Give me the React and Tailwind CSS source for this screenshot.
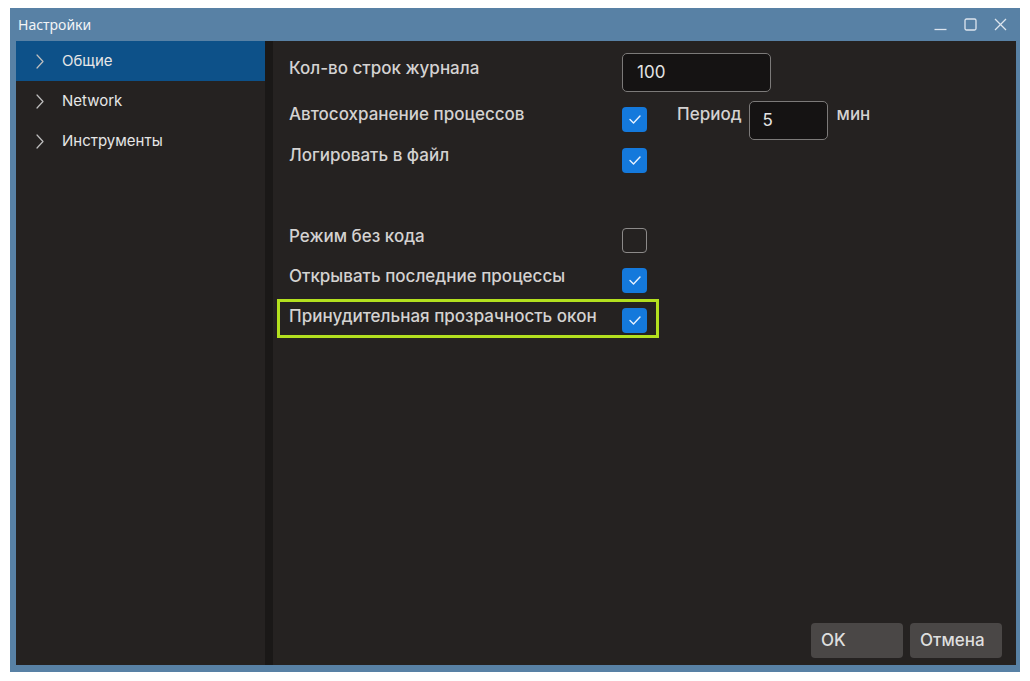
import React from "react";

const Check = ({ on }) =>
  on ? (
    <div className="w-[25px] h-[25px] rounded-[4px] bg-[#1479dc] flex items-center justify-center shrink-0">
      <svg width="14" height="11" viewBox="0 0 14 11" fill="none">
        <polyline points="2,5.5 5.5,9 12,2" stroke="#e8f2ff" strokeWidth="1.4" strokeLinecap="round" strokeLinejoin="round" />
      </svg>
    </div>
  ) : (
    <div className="w-[25px] h-[25px] rounded-[4px] border-[1.5px] border-[#8c8a89] shrink-0" />
  );

const Chevron = () => (
  <svg width="8" height="15" viewBox="0 0 8 15" fill="none" className="shrink-0">
    <polyline points="1,1 7,7.5 1,14" stroke="#bfbfbf" strokeWidth="1.2" strokeLinecap="round" strokeLinejoin="round" />
  </svg>
);

const NavItem = ({ label, active }) => (
  <div className={`h-[40px] flex items-center pl-[20px] ${active ? "bg-[#0d5189]" : ""}`}>
    <Chevron />
    <span className="ml-[18px] text-[15px] text-[#e6e6e6]">{label}</span>
  </div>
);

export default function App() {
  return (
    <div className="w-[1030px] h-[681px] bg-white pt-[8px] pl-[10px]" style={{ fontFamily: "Inter, 'Noto Sans', sans-serif" }}>
      <div className="w-[1010px] h-[664px] bg-[#5881a5] flex flex-col">
        {/* Title bar */}
        <div className="h-[33px] flex items-center pl-[8px] pr-[13px] shrink-0">
          <span className="text-[14px] text-[#f2f4f6]" style={{ fontFamily: "'Noto Sans', sans-serif" }}>Настройки</span>
          <div className="ml-auto flex items-center gap-[17px]">
            <svg width="13" height="13" viewBox="0 0 13 13">
              <line x1="0.5" y1="11.5" x2="12.5" y2="11.5" stroke="#dde5ee" strokeWidth="1.3" />
            </svg>
            <svg width="13" height="13" viewBox="0 0 13 13" fill="none">
              <rect x="1" y="1" width="11" height="11" rx="1.5" stroke="#dde5ee" strokeWidth="1.3" />
            </svg>
            <svg width="13" height="13" viewBox="0 0 13 13">
              <line x1="1" y1="1" x2="12" y2="12" stroke="#dde5ee" strokeWidth="1.3" />
              <line x1="12" y1="1" x2="1" y2="12" stroke="#dde5ee" strokeWidth="1.3" />
            </svg>
          </div>
        </div>
        {/* Body */}
        <div className="flex-1 flex pl-[6px] pr-[4px] pb-[7px] min-h-0">
          <div className="w-[249px] bg-[#252221] flex flex-col shrink-0">
            <NavItem label="Общие" active />
            <NavItem label="Network" />
            <NavItem label="Инструменты" />
          </div>
          <div className="w-[8px] bg-[#1a1817] shrink-0" />
          <div className="flex-1 bg-[#252221] flex flex-col pl-[16px] pt-[12px] text-[17px] font-medium text-[#d4d2d1]">
            {/* Row 1 */}
            <div className="flex h-[39px]">
              <div className="w-[333px] pt-[3px] leading-[24px]">Кол-во строк журнала</div>
              <div className="w-[149px] h-[39px] rounded-[5px] border border-[#7c7a79] bg-[#151313] flex items-center pl-[14px] text-[17px] font-normal text-[#e4e4e4]">100</div>
            </div>
            {/* Row 2 */}
            <div className="flex h-[39px] mt-[9px]">
              <div className="w-[333px] pt-[1px] leading-[24px]">Автосохранение процессов</div>
              <div className="mt-[6px]"><Check on /></div>
              <div className="ml-[30px] pt-[1px] leading-[24px]">Период</div>
              <div className="ml-[7px] w-[79px] h-[39px] rounded-[5px] border border-[#7c7a79] bg-[#151313] flex items-center pl-[13px] text-[17px] font-normal text-[#e4e4e4]">5</div>
              <div className="ml-[9px] pt-[1px] leading-[24px]">мин</div>
            </div>
            {/* Row 3 */}
            <div className="flex h-[32px]">
              <div className="w-[333px] pt-[3px] leading-[24px]">Логировать в файл</div>
              <div className="mt-[8px]"><Check on /></div>
            </div>
            {/* Row 4 */}
            <div className="flex h-[29px] mt-[52px]">
              <div className="w-[333px] leading-[24px]">Режим без кода</div>
              <div className="mt-[4px]"><Check /></div>
            </div>
            {/* Row 5 */}
            <div className="flex h-[29px] mt-[11px]">
              <div className="w-[333px] leading-[24px]">Открывать последние процессы</div>
              <div className="mt-[4px]"><Check on /></div>
            </div>
            {/* Row 6 highlighted */}
            <div className="flex w-[382px] h-[39px] mt-[6px] -ml-[12px] border-[3px] border-[#b3e01f] pl-[9px]">
              <div className="w-[333px] pt-[2px] leading-[24px] whitespace-nowrap">Принудительная прозрачность окон</div>
              <div className="mt-[6px]"><Check on /></div>
            </div>
            <div className="flex-1" />
            <div className="flex justify-end gap-[7px] pr-[14px] pb-[7px]">
              <div className="w-[92px] h-[35px] rounded-[4px] bg-[#4a4746] flex items-center pl-[10px] text-[#dedede]">OK</div>
              <div className="w-[92px] h-[35px] rounded-[4px] bg-[#4a4746] flex items-center pl-[10px] text-[#dedede]">Отмена</div>
            </div>
          </div>
        </div>
      </div>
    </div>
  );
}
